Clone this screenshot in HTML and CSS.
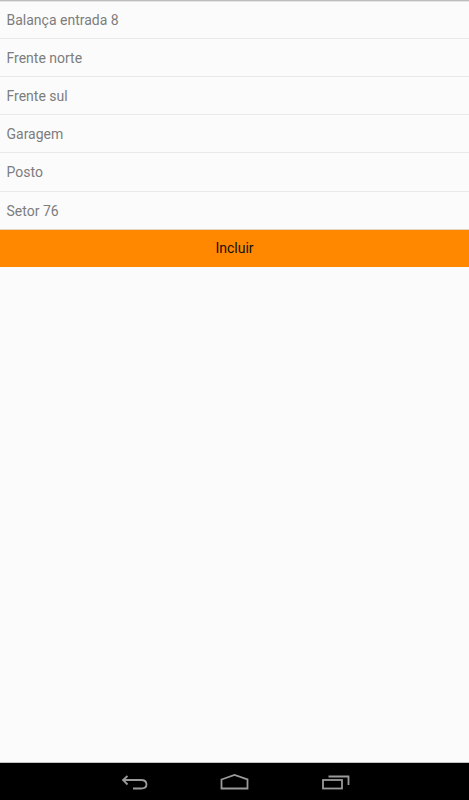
FILE: index.html
```html
<!DOCTYPE html>
<html lang="pt">
<head>
  <meta charset="UTF-8">
  <title>Setores</title>
  <link rel="stylesheet" href="styles.css">
</head>
<body>
  <div class="content">
    <ul class="list">
      <li class="row">Balança entrada 8</li>
      <li class="row">Frente norte</li>
      <li class="row">Frente sul</li>
      <li class="row">Garagem</li>
      <li class="row">Posto</li>
      <li class="row">Setor 76</li>
    </ul>
    <button class="add-btn">Incluir</button>
  </div>

  <!-- Android nav bar -->
  <div class="navbar">
    <svg class="nav-icon" width="40" height="30" viewBox="0 0 40 30">
      <path d="M8 15H26Q31.500 15 31.500 19.500Q31.500 23.500 26 23.500H18"/>
      <path d="M12.500 11L8 15L12.500 19.500"/>
    </svg>
    <svg class="nav-icon" width="40" height="30" viewBox="0 0 40 30">
      <path d="M6.500 14.500L19.500 10L32.500 14.500V23.500H6.500Z"/>
    </svg>
    <svg class="nav-icon" width="40" height="30" viewBox="0 0 40 30">
      <rect x="8" y="15" width="19" height="8.500"/>
      <path d="M13.500 11.500H33.500V20"/>
    </svg>
  </div>
</body>
</html>
```

FILE: styles.css
```css
html, body {
  height: 100%;
}
body {
  margin: 0;
  display: flex;
  flex-direction: column;
  background: #fbfbfb;
  font-family: Roboto, sans-serif;
}
.content {
  flex: 1;
  box-shadow: inset 0 1px 0 #bdbdbd, inset 0 2px 0 #e6e6e6;
}
.list {
  list-style: none;
  margin: 0;
  padding: 0.6px 0 0;
}
.row {
  box-sizing: border-box;
  height: 38.2px;
  line-height: 38px;
  padding-left: 6.5px;
  font-size: 14px;
  color: #7d7d7d;
  border-bottom: 1px solid #e9e9e9;
}
.row:last-child {
  height: 38.4px;
  line-height: 39px;
  border-bottom-color: #e6d4c6;
}
.add-btn {
  display: block;
  width: 100%;
  height: 37px;
  border: none;
  padding: 0;
  background: #ff8800;
  color: #111;
  font-family: Roboto, sans-serif;
  font-size: 14px;
}
.navbar {
  box-sizing: border-box;
  height: 37px;
  flex-shrink: 0;
  background: #000;
  box-shadow: 0 -1px 0 #c4c4c4;
  display: flex;
  gap: 60px;
  padding: 2px 0 0 115px;
}
.nav-icon {
  display: block;
  fill: none;
  stroke: #9a9a9a;
  stroke-width: 1.8;
}
```
